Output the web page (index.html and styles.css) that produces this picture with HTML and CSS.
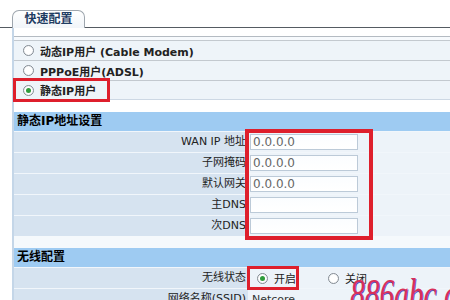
FILE: index.html
```html
<!DOCTYPE html>
<html lang="zh-CN">

<head>
    <meta charset="UTF-8">
    <title>快速配置</title>
    <link rel="stylesheet" href="styles.css">
</head>

<body>
    <div class="tabbar">
        <div class="tab">快速配置</div>
    </div>

    <div class="panel">
        <!-- WAN mode -->
        <div class="modes">
            <div class="mode"><span class="radio"></span>动态IP用户 (Cable Modem)</div>
            <div class="mode"><span class="radio"></span>PPPoE用户(ADSL)</div>
            <div class="mode"><span class="radio on"></span>静态IP用户</div>
        </div>

        <!-- Static IP -->
        <div class="section">
            <div class="sec-title">静态IP地址设置</div>
            <div class="row">
                <div class="label">WAN IP 地址</div>
                <div class="value"><input type="text" value="0.0.0.0"></div>
            </div>
            <div class="row">
                <div class="label">子网掩码</div>
                <div class="value"><input type="text" value="0.0.0.0"></div>
            </div>
            <div class="row">
                <div class="label">默认网关</div>
                <div class="value"><input type="text" value="0.0.0.0"></div>
            </div>
            <div class="row">
                <div class="label">主DNS</div>
                <div class="value"><input type="text" value=""></div>
            </div>
            <div class="row">
                <div class="label">次DNS</div>
                <div class="value"><input type="text" value=""></div>
            </div>
        </div>

        <div class="spacer"></div>

        <!-- Wireless -->
        <div class="section">
            <div class="sec-title">无线配置</div>
            <div class="row">
                <div class="label">无线状态</div>
                <div class="value">
                    <span class="choice"><span class="radio on"></span>开启</span>
                    <span class="choice"><span class="radio"></span>关闭</span>
                </div>
            </div>
            <div class="row">
                <div class="label">网络名称(SSID)</div>
                <div class="value"><span class="plain">Netcore</span></div>
            </div>
        </div>
    </div>

    <!-- red annotation boxes -->
    <div class="mark mark-static"></div>
    <div class="mark mark-inputs"></div>
    <div class="mark mark-wifi"></div>

    <div class="watermark">886abc.com</div>
</body>

</html>
```

FILE: styles.css
```css
/* Basic Reset */
* {
    margin: 0;
    padding: 0;
    box-sizing: border-box;
}

html, body {
    width: 450px;
    height: 300px;
    overflow: hidden;
}

body {
    position: relative;
    background-color: #fff;
    font-family: "DejaVu Sans", "Noto Sans CJK SC", sans-serif;
    font-size: 11px;
    color: #222;
}

/* Tab */
.tabbar {
    height: 28px;
    padding: 10px 0 0 12px;
    border-bottom: 1px solid #555b62;
}

.tab {
    width: 73px;
    height: 18px;
    border: 1px solid #9ea6ae;
    border-bottom: none;
    border-radius: 7px 7px 0 0;
    background: linear-gradient(#ffffff, #f1f5f9);
    color: #1f3d63;
    font-weight: bold;
    font-size: 12px;
    line-height: 16px;
    text-align: center;
}

/* Panel */
.panel {
    margin-left: 12px;
    padding-top: 8px;
    border-left: 2px solid #c4d6e8;
}

.modes {
    border-top: 1px solid #b4bbc2;
    padding-top: 3px;
    background-color: #f7fafd;
}

.mode {
    display: flex;
    align-items: center;
    height: 20px;
    padding-left: 9px;
    border-top: 1px solid #c3c9cf;
    background-color: #eef4f9;
    font-weight: bold;
}

.mode:last-child {
    border-bottom: 1px solid #cdd8e4;
}

.radio {
    display: inline-block;
    width: 11px;
    height: 11px;
    margin-right: 6px;
    border: 1px solid #858c94;
    border-radius: 50%;
    background: radial-gradient(circle, #fff 50%, #e4e8ec 100%);
    position: relative;
}

.radio.on::after {
    content: "";
    position: absolute;
    left: 2px;
    top: 2px;
    width: 5px;
    height: 5px;
    border-radius: 50%;
    background-color: #2f9c3c;
}

/* Sections */
.section {
    margin-top: 12px;
}

.sec-title {
    height: 19px;
    padding-left: 3px;
    background-color: #9ecbf2;
    color: #000;
    font-weight: bold;
    font-size: 12px;
    line-height: 19px;
}

.row {
    display: grid;
    grid-template-columns: 234px 1fr;
    height: 21px;
    border-top: 1px solid #f1f6fb;
}

.label {
    padding-right: 2px;
    background-color: #d6e3f0;
    text-align: right;
    line-height: 20px;
    color: #222;
}

.value {
    display: flex;
    align-items: center;
    padding-left: 2px;
    background-color: #edf3f9;
}

.value input {
    width: 108px;
    height: 16px;
    padding-left: 2px;
    border: 1px solid #bccad8;
    background: linear-gradient(#fbfdff, #ffffff);
    font-family: "DejaVu Sans", sans-serif;
    font-size: 12px;
    color: #666;
    outline: none;
}

.choice {
    display: inline-flex;
    align-items: center;
    margin-left: 7px;
    margin-right: 25px;
}

.plain {
    padding-left: 2px;
    color: #333;
}

.spacer {
    height: 12px;
    background-color: #f5f9fc;
}

.spacer + .section {
    margin-top: 0;
}

/* Red annotation boxes */
.mark {
    position: absolute;
    border: 3px solid #de1f2c;
}

.mark-static {
    left: 13px;
    top: 78px;
    width: 97px;
    height: 24px;
}

.mark-inputs {
    left: 245px;
    top: 129px;
    width: 128px;
    height: 111px;
    border-width: 4px;
}

.mark-wifi {
    left: 247px;
    top: 266px;
    width: 52px;
    height: 24px;
}

/* Watermark */
.watermark {
    position: absolute;
    left: 350px;
    top: 271px;
    font-family: "Liberation Serif", serif;
    font-style: italic;
    font-size: 42px;
    line-height: 46px;
    color: #d8305a;
    text-shadow: 1px 1px 0 #5b58c4;
    white-space: nowrap;
    transform: scaleX(0.7);
    transform-origin: left top;
}
```
